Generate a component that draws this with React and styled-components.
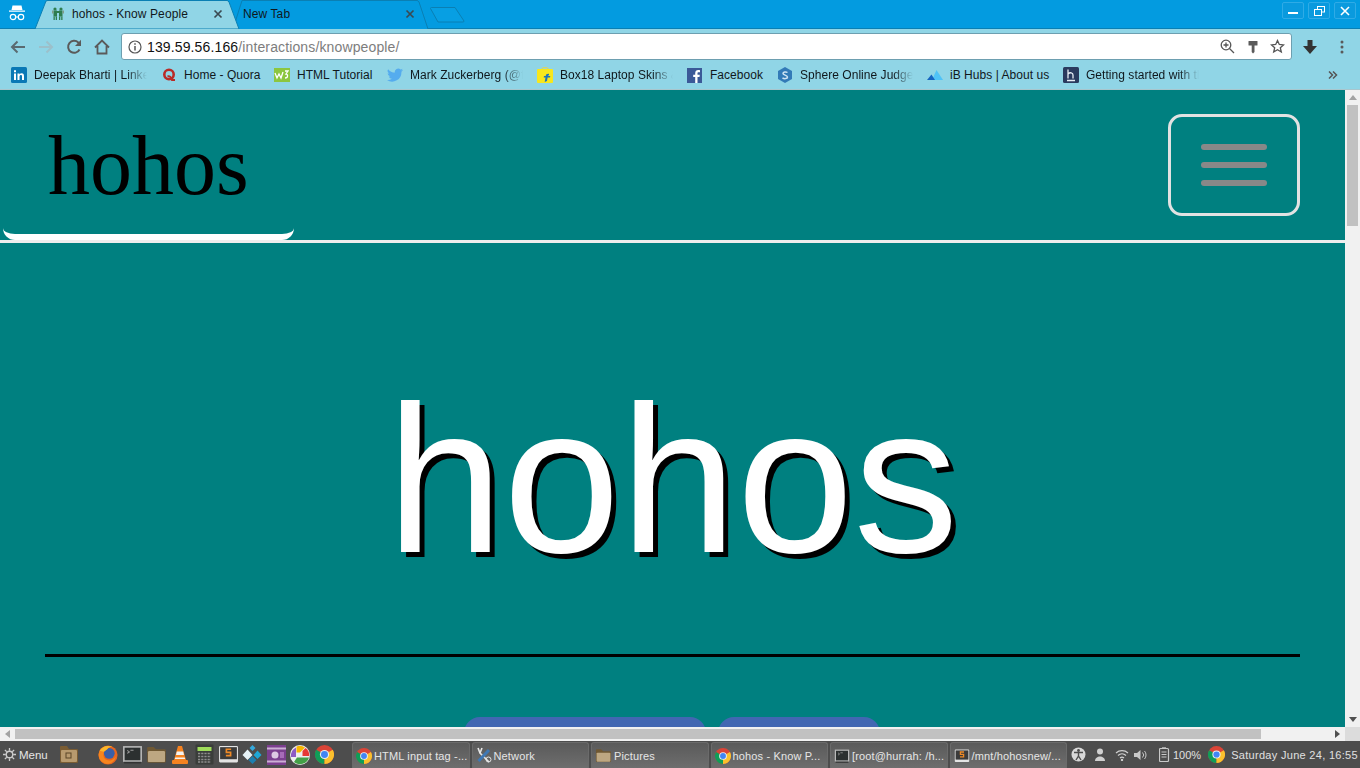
import styled, { createGlobalStyle } from 'styled-components'

const Global = createGlobalStyle`
  html, body { margin: 0; padding: 0; height: 100%; overflow: hidden; }
  body { font-family: "Liberation Sans", Arial, sans-serif; }
  * { box-sizing: border-box; }
`

const Screen = styled.div`
  width: 1360px;
  height: 768px;
  display: flex;
  flex-direction: column;
  overflow: hidden;
`

/* browser tabs */
const TabStrip = styled.div`
  height: 29px;
  flex: none;
  display: flex;
  background: #039be0;
  border-bottom: 1px solid #0a7fb3;
  position: relative;
`
const Incognito = styled.div`
  width: 34px;
  display: flex;
  align-items: center;
  justify-content: center;
  padding-bottom: 2px;
`
const Tab = styled.div`
  position: relative;
  height: 29px;
  width: ${(p) => p.$w}px;
  margin-left: ${(p) => p.$ml || 0}px;
  padding: 0 ${(p) => p.$pr}px 2px ${(p) => p.$pl}px;
  display: flex;
  align-items: center;
  font-size: 12px;
  letter-spacing: 0.1px;
  color: #10181c;
  z-index: ${(p) => (p.$active ? 2 : 1)};
`
const TabShape = styled.svg`
  position: absolute;
  left: 0;
  top: 0;
  width: 100%;
  height: 100%;
`
const TabTitle = styled.span`
  position: relative;
  flex: 1;
  margin-left: ${(p) => p.$ml || 0}px;
  white-space: nowrap;
`
const TabIcon = styled.span`
  position: relative;
  display: flex;
`
const NewTab = styled.svg`
  flex: none;
  margin: 7px 0 0 2px;
  width: 36px;
  height: 17px;
`
const WinButtons = styled.div`
  margin-left: auto;
  padding: 2px 4px 0 0;
  display: flex;
  gap: 4px;
`
const WinButton = styled.div`
  width: 22px;
  height: 17px;
  display: flex;
  align-items: center;
  justify-content: center;
  border: 1px solid #2fabe6;
  border-radius: 2px;
  background: #0a9ade;
`

/* toolbar */
const Toolbar = styled.div`
  height: 31px;
  flex: none;
  display: flex;
  align-items: center;
  background: #90d5e6;
  padding-top: 4px;
`
const NavIcon = styled.div`
  width: 28px;
  height: 26px;
  flex: none;
  display: flex;
  align-items: center;
  justify-content: center;
  margin-left: ${(p) => p.$ml || 0}px;
`
const NavIcons = styled.div`
  display: flex;
  padding-left: 4px;
  width: 121px;
`
const Omnibox = styled.div`
  width: 1171px;
  height: 27px;
  flex: none;
  display: flex;
  align-items: center;
  background: #fff;
  border: 1px solid #6d9fb0;
  border-radius: 3px;
  padding: 0 1px 0 6px;
  font-size: 14px;
  letter-spacing: 0.13px;
`
const UrlHost = styled.span`
  margin-left: 5px;
  color: #111;
`
const UrlPath = styled.span`
  color: #7d7d7d;
  flex: 1;
`
const OmniIcon = styled.div`
  width: 25px;
  display: flex;
  justify-content: center;
`

/* bookmarks */
const BookmarkBar = styled.div`
  height: 30px;
  flex: none;
  display: flex;
  align-items: center;
  background: #90d5e6;
  padding: 1px 0 0 11px;
  border-bottom: 1px solid #a9c6cd;
`
const Bookmark = styled.div`
  width: ${(p) => p.$w}px;
  flex: none;
  display: flex;
  align-items: center;
  gap: 7px;
  font-size: 12px;
  letter-spacing: 0.04px;
  color: #10181c;
`
const BookmarkLabel = styled.span`
  white-space: nowrap;
  overflow: hidden;
  width: ${(p) => p.$w}px;
  ${(p) => p.$fade && 'mask-image: linear-gradient(to right, #000 82%, transparent 100%);'}
`
const Chevrons = styled.div`
  margin-left: auto;
  padding-right: 22px;
  display: flex;
`

/* page viewport with its scrollbars */
const Viewport = styled.div`
  flex: 1;
  min-height: 0;
  display: flex;
`
const Page = styled.div`
  flex: 1;
  min-width: 0;
  overflow: hidden;
  background: #008080;
`
const Header = styled.header`
  height: 153px;
  border-bottom: 3px solid #eee;
  display: flex;
  justify-content: space-between;
  align-items: flex-end;
`
const Logo = styled.div`
  width: 291px;
  height: 150px;
  margin-left: 3px;
  padding: 22px 0 0 45px;
  border-bottom: 6px solid #fff;
  border-radius: 12px;
  font-family: "Liberation Serif", "Times New Roman", serif;
  font-size: 84px;
  line-height: 108px;
  color: #000;
`
const MenuButton = styled.button`
  width: 132px;
  height: 102px;
  margin: 0 45px 24px 0;
  padding: 0;
  background: transparent;
  border: 3px solid #e2e2e2;
  border-radius: 14px;
  display: flex;
  flex-direction: column;
  align-items: center;
  justify-content: center;
  gap: 12px;
`
const MenuBar = styled.span`
  width: 66px;
  height: 6px;
  border-radius: 3px;
  background: #888;
`
const Hero = styled.section`
  margin: 0 45px;
  height: 414px;
  padding-top: 60px;
  border-bottom: 3px solid #000;
  text-align: center;
  font-size: 210px;
  line-height: 354px;
  color: #fff;
  text-shadow: 5px 5px 0 #000;
`
const Actions = styled.div`
  display: flex;
  gap: 12px;
  margin: 60px 0 0 464px;
`
const ActionButton = styled.div`
  width: ${(p) => p.$w}px;
  height: 48px;
  flex: none;
  border-radius: 16px;
  background: #4267b2;
`
const VScroll = styled.div`
  width: 15px;
  flex: none;
  background: #f1f1f1;
  display: flex;
  flex-direction: column;
  align-items: center;
  padding-top: 5px;
`
const VThumb = styled.div`
  width: 11px;
  height: 121px;
  margin-top: 5px;
  background: #c1c1c1;
`
const DownArrow = styled.div`
  margin-top: auto;
  margin-bottom: 5px;
  border: 4px solid transparent;
  border-top: 5px solid #505050;
  border-bottom: 0;
`
const UpArrow = styled.div`
  border: 4px solid transparent;
  border-bottom: 5px solid #a3a3a3;
  border-top: 0;
`
const HScroll = styled.div`
  height: 14px;
  flex: none;
  background: #f1f1f1;
  display: flex;
  align-items: center;
`
const LeftArrow = styled.div`
  width: 15px;
  display: flex;
  justify-content: center;
  &::before {
    content: '';
    border: 4px solid transparent;
    border-right: 5px solid #a3a3a3;
    border-left: 0;
  }
`
const RightArrow = styled.div`
  margin-left: auto;
  width: 15px;
  display: flex;
  justify-content: center;
  &::before {
    content: '';
    border: 4px solid transparent;
    border-left: 5px solid #505050;
    border-right: 0;
  }
`
const HThumb = styled.div`
  width: 1246px;
  height: 10px;
  background: #c1c1c1;
`
const Corner = styled.div`
  width: 15px;
  height: 14px;
  background: #dcdcdc;
`

/* desktop panel */
const Panel = styled.div`
  height: 27px;
  flex: none;
  display: flex;
  align-items: center;
  background: #4d4d4d;
  color: #e6e6e6;
  font-size: 11px;
`
const MenuApplet = styled.div`
  flex: none;
  display: flex;
  align-items: center;
  gap: 3px;
  width: 57px;
  padding-left: 3px;
  font-size: 11.5px;
`
const Launcher = styled.div`
  flex: none;
  display: flex;
  align-items: center;
  width: 295px;
`
const LaunchIcon = styled.div`
  width: 24px;
  height: 24px;
  flex: none;
  display: flex;
  align-items: center;
  justify-content: center;
  margin-right: ${(p) => p.$mr || 0}px;
`
const WindowList = styled.div`
  flex: none;
  display: flex;
  gap: 2px;
  height: 100%;
  padding-top: 1px;
`
const WindowButton = styled.div`
  width: 117.5px;
  flex: none;
  display: flex;
  align-items: center;
  gap: 2px;
  padding: 0 3px;
  border: 1px solid #6b6b6b;
  border-bottom: 0;
  border-radius: 3px 3px 0 0;
  background: linear-gradient(#5a5a5a, #6e6e6e);
  letter-spacing: 0.15px;
  white-space: nowrap;
  overflow: hidden;
  & > svg {
    flex: none;
  }
`
const Tray = styled.div`
  flex: 1;
  min-width: 0;
  display: flex;
  align-items: center;
  color: #e0e0e0;
  white-space: nowrap;
`
const TrayIcon = styled.div`
  width: ${(p) => p.$w || 22}px;
  margin-left: ${(p) => p.$ml || 0}px;
  flex: none;
  display: flex;
  justify-content: center;
`
const Clock = styled.span`
  flex: none;
  letter-spacing: 0.3px;
`

/* drawings */
const Chrome = ({ size = 16 }) => (
  <svg width={size} height={size} viewBox="0 0 24 24">
    <circle cx="12" cy="12" r="12" fill="#db4437" />
    <path d="M12 12L1.600 6A12 12 0 0 0 12 24Z" fill="#0f9d58" />
    <path d="M12 12L12 24A12 12 0 0 0 22.400 6Z" fill="#fbc02d" />
    <circle cx="12" cy="12" r="5.800" fill="#eee" />
    <circle cx="12" cy="12" r="4.400" fill="#4285f4" />
  </svg>
)
const Folder = ({ size = 18 }) => (
  <svg width={size} height={size} viewBox="0 0 18 18">
    <path d="M1 3.500Q1 2.500 2 2.500h4.500l2 2h7.500q1 0 1 1V15q0 1-1 1H2q-1 0-1-1z" fill="#6f5833" />
    <rect x="1.700" y="6" width="14.600" height="9.500" rx="1" fill="#bda782" />
  </svg>
)
const Terminal = ({ size = 16 }) => (
  <svg width={size} height={size} viewBox="0 0 20 20">
    <rect x="1" y="2" width="18" height="15" fill="#b9b9b9" />
    <rect x="2.500" y="3.500" width="15" height="12" fill="#2c3030" />
    <path d="M5 6l2 1.500L5 9M8 6h3" stroke="#9a9a9a" fill="none" />
    <rect x="2" y="17" width="16" height="1.500" fill="#333" />
  </svg>
)
const Sublime = ({ size = 18 }) => (
  <svg width={size} height={size} viewBox="0 0 20 20">
    <rect x="1" y="2" width="18" height="15.500" rx="1" fill="#e4e4e4" />
    <rect x="2" y="3" width="16" height="11.500" fill="#3b3b3b" />
    <path d="M12.500 5H8v3h4v3H7.500" stroke="#ef8a26" strokeWidth="1.600" fill="none" />
  </svg>
)

const bookmarks = [
  { w: 150, lw: 113, fade: true, label: 'Deepak Bharti | LinkedIn', icon: (
    <svg width="16" height="16" viewBox="0 0 16 16"><rect width="16" height="16" rx="1.500" fill="#0a78b5" /><path d="M3 6.500h2V13H3zM3 3.200h2v2H3zM6.500 6.500h2v1c.5-.8 1.200-1.200 2.200-1.200 1.700 0 2.300 1.100 2.300 2.900V13h-2V9.600c0-.9-.2-1.500-1-1.500s-1.500.6-1.500 1.600V13h-2z" fill="#fff" /></svg>
  ) },
  { w: 113, lw: 80, label: 'Home - Quora', icon: (
    <svg width="16" height="16" viewBox="0 0 16 16"><circle cx="8" cy="7.500" r="4.700" fill="none" stroke="#b92b27" strokeWidth="2.600" /><path d="M6.500 9.500c2-.8 3.500.5 4.500 3.500h3" stroke="#b92b27" strokeWidth="2" fill="none" /></svg>
  ) },
  { w: 113, lw: 80, label: 'HTML Tutorial', icon: (
    <svg width="16" height="16" viewBox="0 0 16 16"><rect y="1" width="16" height="14" fill="#8cc63f" /><path d="M1 6l2 5 2-4 2 4 2-6M11 4h3l-2 3c2 0 2.500 4-1 4" stroke="#fff" strokeWidth="1.300" fill="none" /></svg>
  ) },
  { w: 150, lw: 113, fade: true, label: 'Mark Zuckerberg (@finkd)', icon: (
    <svg width="16" height="16" viewBox="0 0 24 24"><path d="M24 4.600a10 10 0 0 1-2.800.8 5 5 0 0 0 2.200-2.700 10 10 0 0 1-3.100 1.200 4.900 4.900 0 0 0-8.400 4.500A14 14 0 0 1 1.700 3.200a4.900 4.900 0 0 0 1.500 6.600 5 5 0 0 1-2.200-.6 4.900 4.900 0 0 0 3.900 4.900 5 5 0 0 1-2.200.1 4.900 4.900 0 0 0 4.600 3.400A10 10 0 0 1 0 19.600 14 14 0 0 0 21.600 7.100 10 10 0 0 0 24 4.600z" fill="#55acee" /></svg>
  ) },
  { w: 150, lw: 113, fade: true, label: 'Box18 Laptop Skins & More', icon: (
    <svg width="16" height="16" viewBox="0 0 16 16"><path d="M4.500 2.500a3.500 2 0 0 1 7 0" fill="none" stroke="#e8d44a" /><rect y="2" width="16" height="14" rx="1" fill="#f8e71c" /><path d="M12 7c-2-.5-3 .5-3.300 2H7l-.3 1.500h1.800L7.700 15l2.300-1 .6-3.500H13l.3-1.500H11c.2-.7.5-1 1-.8z" fill="#1f74ba" /></svg>
  ) },
  { w: 90, lw: 60, label: 'Facebook', icon: (
    <svg width="16" height="16" viewBox="0 0 16 16"><rect width="15" height="15" y="1" fill="#3b5998" /><path d="M10.500 16v-6h2l.3-2.300h-2.300V6.300c0-.7.2-1.100 1.100-1.100H13V3.200c-.3 0-1-.1-1.800-.1-1.800 0-3 1.100-3 3.100v1.500h-2V10h2v6z" fill="#fff" /></svg>
  ) },
  { w: 150, lw: 113, fade: true, label: 'Sphere Online Judge (SPOJ)', icon: (
    <svg width="16" height="16" viewBox="0 0 16 16"><path d="M8 0l7 4v8l-7 4-7-4V4z" fill="#337ab7" /><path d="M10.500 5.500C9 4.500 6 4.800 6 6.500S10.500 8 10.500 10 7 12 5.500 10.800" stroke="#cfe3f3" strokeWidth="1.500" fill="none" /></svg>
  ) },
  { w: 136, lw: 102, label: 'iB Hubs | About us', icon: (
    <svg width="16" height="16" viewBox="0 0 16 16"><path d="M9.500 3L16 13H5z" fill="#4fc3f7" /><path d="M4.500 7.500L8 13H0z" fill="#1565c0" /></svg>
  ) },
  { w: 170, lw: 113, fade: true, label: 'Getting started with the', icon: (
    <svg width="16" height="16" viewBox="0 0 16 16"><rect width="16" height="16" rx="1.500" fill="#2a3a5e" /><path d="M5 2.500v9M5 7c2-2 5-1.500 5 1v3.500M4 13.500h8" stroke="#e8edf5" strokeWidth="1.300" fill="none" /></svg>
  ) },
]

const launchers = [
  <svg width="20" height="20" viewBox="0 0 24 24"><circle cx="12" cy="12" r="11.500" fill="#e8651e" /><circle cx="13.500" cy="10" r="6.500" fill="#3a5fa8" /><path d="M2 7C5 1 12 0 17 2c-3 0-5 1-6 3L7 8l-.5 5c.5 4 4 6 8 5.500 3-.5 5-2 7-5-1 5-5 9-10 9C6 22.500 1 18 .8 12 .8 10 1.300 8.500 2 7z" fill="#f6861f" /><path d="M2 7C5 1 12 0 17 2c-3 0-5 1-6 3L7 8z" fill="#fbb72b" /></svg>,
  <Terminal size={21} />,
  <Folder size={21} />,
  <svg width="18" height="20" viewBox="0 0 18 20"><path d="M7 1h4l4 14H3z" fill="#f58220" /><path d="M5.800 6.500h6.400l.8 3.500H5zM4.300 12.500h9.400l.5 1.500H3.800z" fill="#f3f3f3" /><rect x="1" y="15" width="16" height="4" rx="1" fill="#f58220" /></svg>,
  <svg width="19" height="21" viewBox="0 0 19 21"><rect x="0.500" y="0.500" width="18" height="20" rx="1" fill="#3a3d3a" /><rect x="2.500" y="3" width="14" height="4" fill="#9fdc5a" /><path d="M3 9.500h13M3 12.500h13M3 15.500h13M3 18h13" stroke="#8e8e8e" strokeWidth="1.500" strokeDasharray="2.200 1" /></svg>,
  <Sublime size={21} />,
  <svg width="20" height="20" viewBox="0 0 20 20"><path d="M10.500 0l3 3-3 3-3-3z" fill="#35a9dc" /><path d="M5.500 4.500l5 5.500-5 5-5-5z" fill="#e8f4f8" /><path d="M15.500 5.500l4 4.500-4 4-4-4z" fill="#1ea7d7" /><path d="M10.500 11l4 4-4 4-4-4z" fill="#1c7fb0" /></svg>,
  <svg width="19" height="20" viewBox="0 0 19 20"><rect width="19" height="20" fill="#7b3f8f" /><rect y="2.500" width="19" height="2" fill="#cbb0d4" /><rect y="15.500" width="19" height="2" fill="#cbb0d4" /><circle cx="8" cy="10" r="3.500" fill="#ddc8e3" /><rect x="13" y="7" width="4" height="6" fill="#a66cb8" /></svg>,
  <svg width="20" height="20" viewBox="0 0 20 20"><circle cx="10" cy="10" r="10" fill="#eee" /><path d="M6.500 1.500A9.300 9.300 0 0 1 15 2.500L10 7.500H6.500z" fill="#f7b500" /><path d="M15.500 3A9.300 9.300 0 0 1 19.300 11H12.500V6z" fill="#e53935" /><path d="M19 12.500A9.300 9.300 0 0 1 4 17l3-4.500z" fill="#43a047" /><path d="M6 2.500V12H1A9.300 9.300 0 0 1 6 2.500z" fill="#8e5bc4" /></svg>,
  <Chrome size={19} />,
]

const windows = [
  { label: 'HTML input tag -...', icon: <Chrome size={16} /> },
  { label: 'Network', icon: (
    <svg width="16" height="17" viewBox="0 0 16 17" fill="none"><path d="M2 1l2 5M6 1L4 6l9 9" stroke="#e6e6e6" strokeWidth="1.600" /><circle cx="12.500" cy="12.500" r="2.500" stroke="#e6e6e6" /><path d="M13 3L2.500 14" stroke="#3f78b5" strokeWidth="3" /></svg>
  ) },
  { label: 'Pictures', icon: <Folder size={17} /> },
  { label: 'hohos - Know P...', icon: <Chrome size={16} /> },
  { label: '[root@hurrah: /h...', icon: <Terminal size={16} /> },
  { label: '/mnt/hohosnew/...', icon: <Sublime size={16} /> },
]

const Close = () => (
  <svg width="10" height="10" viewBox="0 0 10 10"><path d="M1.500 1.500l7 7M8.500 1.500l-7 7" stroke="#3a4a52" strokeWidth="1.700" /></svg>
)

export default function App() {
  return (
    <Screen>
      <Global />
      <TabStrip>
        <Incognito>
          <svg width="18" height="19" viewBox="0 0 18 19" fill="#fff">
            <path d="M4.500 1.500h9l1 4.500h-11zM1 6.500h16v1.200H1z" />
            <circle cx="5" cy="13" r="2.700" fill="none" stroke="#fff" strokeWidth="1.200" />
            <circle cx="13" cy="13" r="2.700" fill="none" stroke="#fff" strokeWidth="1.200" />
            <path d="M7.500 13h3" stroke="#fff" />
          </svg>
        </Incognito>
        <Tab $active $w={206} $pl={18} $pr={17}>
          <TabShape viewBox="0 0 206 29" preserveAspectRatio="none">
            <path d="M1 29 L12 1 Q13 .5 14 .5 L193 .5 Q194 .5 195 2 L205 29 Z" fill="#90d5e6" stroke="#0a7fb3" />
          </TabShape>
          <TabIcon>
            <svg width="12" height="14" viewBox="0 0 12 14" fill="#2e7d4f">
              <circle cx="3" cy="2" r="1.600" />
              <circle cx="9" cy="2" r="1.600" />
              <rect x="1.500" y="3.500" width="3.500" height="6" />
              <rect x="7" y="3.500" width="3.500" height="6" />
              <rect x="5" y="4" width="2" height="2" />
              <path d="M1.500 9.500h1.300V13H1.500zM3.700 9.500H5V13H3.700zM7 9.500h1.300V13H7zM9.200 9.500h1.300V13H9.200z" />
              <path d="M0 3.500h1.500v3H0zM10.500 3.500H12v3h-1.500z" fill="#7f9c8a" />
            </svg>
          </TabIcon>
          <TabTitle $ml={8}>hohos - Know People</TabTitle>
          <TabIcon><Close /></TabIcon>
        </Tab>
        <Tab $w={196} $ml={-8} $pl={11} $pr={13}>
          <TabShape viewBox="0 0 196 29" preserveAspectRatio="none">
            <path d="M1 29 L1 29 L10 .5 L185 .5 Q186 .5 187 2 L196 29" fill="#039be0" stroke="#0a7fb3" />
          </TabShape>
          <TabTitle>New Tab</TabTitle>
          <TabIcon><Close /></TabIcon>
        </Tab>
        <NewTab viewBox="0 0 36 17">
          <path d="M.5 1.500Q.5 .5 1.500 .5H25L34 14Q34 15 33 15H8z" fill="#079fe3" stroke="#0a7fb3" />
        </NewTab>
        <WinButtons>
          <WinButton>
            <svg width="10" height="10" viewBox="0 0 10 10"><rect y="6" width="10" height="2" fill="#fff" /></svg>
          </WinButton>
          <WinButton>
            <svg width="11" height="10" viewBox="0 0 11 10" fill="none" stroke="#fff"><rect x="3.500" y=".5" width="7" height="5.500" /><rect x=".5" y="3.500" width="7" height="6" fill="#0a9ade" /></svg>
          </WinButton>
          <WinButton>
            <svg width="10" height="10" viewBox="0 0 10 10"><path d="M1 1l8 8M9 1l-8 8" stroke="#fff" strokeWidth="1.600" /></svg>
          </WinButton>
        </WinButtons>
      </TabStrip>

      <Toolbar>
        <NavIcons>
          <NavIcon>
            <svg width="16" height="14" viewBox="0 0 16 14" fill="none" stroke="#5a6a70" strokeWidth="2"><path d="M15 7H2M7.500 1.500L2 7l5.500 5.500" /></svg>
          </NavIcon>
          <NavIcon>
            <svg width="16" height="14" viewBox="0 0 16 14" fill="none" stroke="#9cc0ca" strokeWidth="2"><path d="M1 7h13M8.500 1.500L14 7l-5.500 5.500" /></svg>
          </NavIcon>
          <NavIcon>
            <svg width="16" height="16" viewBox="0 0 16 16" fill="none"><path d="M13.500 10.500A6 6 0 1 1 12.300 3.500L14.500 5.500" stroke="#5a5a5a" strokeWidth="2" /><path d="M15 .8V7H9z" fill="#5a5a5a" /></svg>
          </NavIcon>
          <NavIcon>
            <svg width="16" height="16" viewBox="0 0 16 16" fill="none" stroke="#5a5a5a" strokeWidth="1.800"><path d="M1 8.500L8 1.500l7 7M3.500 7v7.500h9V7" /></svg>
          </NavIcon>
        </NavIcons>
        <Omnibox>
          <svg width="14" height="14" viewBox="0 0 14 14" fill="none" stroke="#555"><circle cx="7" cy="7" r="6" strokeWidth="1.200" /><path d="M7 6v4.500M7 3.300v1.500" strokeWidth="1.500" /></svg>
          <UrlHost>139.59.56.166</UrlHost>
          <UrlPath>/interactions/knowpeople/</UrlPath>
          <OmniIcon>
            <svg width="15" height="15" viewBox="0 0 15 15" fill="none" stroke="#555" strokeWidth="1.300"><circle cx="6" cy="6" r="4.800" /><path d="M9.500 9.500L14 14M6 3.500v5M3.500 6h5" /></svg>
          </OmniIcon>
          <OmniIcon>
            <svg width="12" height="14" viewBox="0 0 12 14" fill="#5a5a5a"><rect x="1.500" y="1" width="9" height="4.500" rx=".5" /><path d="M4.700 5h2.800v7L6 13.500 4.700 12z" /></svg>
          </OmniIcon>
          <OmniIcon>
            <svg width="15" height="15" viewBox="0 0 15 15" fill="none" stroke="#555" strokeWidth="1.300"><path d="M7.500 1.500l1.800 4 4.200.4-3.200 2.800 1 4.300-3.800-2.300-3.800 2.300 1-4.300L1.500 5.900l4.200-.4z" /></svg>
          </OmniIcon>
        </Omnibox>
        <NavIcon $ml={4}>
          <svg width="14" height="14" viewBox="0 0 14 14" fill="#333"><path d="M4.500 0h5v6H14l-7 8-7-8h4.500z" /></svg>
        </NavIcon>
        <NavIcon $ml={4}>
          <svg width="4" height="14" viewBox="0 0 4 14" fill="#5a5a5a"><circle cx="2" cy="2" r="1.500" /><circle cx="2" cy="7" r="1.500" /><circle cx="2" cy="12" r="1.500" /></svg>
        </NavIcon>
      </Toolbar>

      <BookmarkBar>
        {bookmarks.map((b) => (
          <Bookmark key={b.label} $w={b.w}>
            {b.icon}
            <BookmarkLabel $w={b.lw} $fade={b.fade}>{b.label}</BookmarkLabel>
          </Bookmark>
        ))}
        <Chevrons>
          <svg width="10" height="8" viewBox="0 0 10 8" fill="none" stroke="#555" strokeWidth="1.500"><path d="M1 .5L4.500 4 1 7.500M5 .5L8.500 4 5 7.500" /></svg>
        </Chevrons>
      </BookmarkBar>

      <Viewport>
        <Page>
          <Header>
            <Logo>hohos</Logo>
            <MenuButton>
              <MenuBar />
              <MenuBar />
              <MenuBar />
            </MenuButton>
          </Header>
          <Hero>hohos</Hero>
          <Actions>
            <ActionButton $w={242} />
            <ActionButton $w={162} />
          </Actions>
        </Page>
        <VScroll>
          <UpArrow />
          <VThumb />
          <DownArrow />
        </VScroll>
      </Viewport>
      <HScroll>
        <LeftArrow />
        <HThumb />
        <RightArrow />
        <Corner />
      </HScroll>

      <Panel>
        <MenuApplet>
          <svg width="13" height="13" viewBox="0 0 14 14" fill="none" stroke="#ccc"><circle cx="7" cy="7" r="3.500" strokeWidth="1.500" /><path d="M7 0v3M7 11v3M0 7h3M11 7h3M2 2l2 2M10 10l2 2M12 2l-2 2M4 10l-2 2" strokeWidth="1.400" /></svg>
          Menu
        </MenuApplet>
        <Launcher>
          <LaunchIcon $mr={15}>
            <svg width="20" height="19" viewBox="0 0 20 19"><path d="M1 2q0-1 1-1h6l2 3h8q1 0 1 1v12q0 1-1 1H2q-1 0-1-1z" fill="#7a5c33" /><rect x="2" y="5" width="16" height="12" rx="1" fill="#b89a6e" /><rect x="7" y="8" width="5" height="5" fill="none" stroke="#5a4526" /></svg>
          </LaunchIcon>
          {launchers.map((icon, i) => (
            <LaunchIcon key={i}>{icon}</LaunchIcon>
          ))}
        </Launcher>
        <WindowList>
          {windows.map((w) => (
            <WindowButton key={w.label}>
              {w.icon}
              {w.label}
            </WindowButton>
          ))}
        </WindowList>
        <Tray>
          <TrayIcon>
            <svg width="15" height="15" viewBox="0 0 15 15"><circle cx="7.500" cy="7.500" r="7" fill="#d8d8d8" /><circle cx="7.500" cy="3.500" r="1.400" fill="#4d4d4d" /><path d="M3 5.500h9M7.500 5.500v3.500L5 13M7.500 9l2.500 4" stroke="#4d4d4d" strokeWidth="1.400" fill="none" /></svg>
          </TrayIcon>
          <TrayIcon>
            <svg width="12" height="13" viewBox="0 0 12 13" fill="#d0d0d0"><circle cx="6" cy="3.500" r="3" /><path d="M1 13c0-6 10-6 10 0z" /></svg>
          </TrayIcon>
          <TrayIcon>
            <svg width="14" height="12" viewBox="0 0 14 12" fill="none" stroke="#d0d0d0" strokeWidth="1.200"><path d="M1 4a9 9 0 0 1 12 0M3 6.500a6 6 0 0 1 8 0M5 9a3 3 0 0 1 4 0" /><circle cx="7" cy="11" r=".6" /></svg>
          </TrayIcon>
          <TrayIcon $w={16}>
            <svg width="14" height="12" viewBox="0 0 14 12" fill="#c8c8c8"><path d="M0 4h3l3.500-3v10L3 8H0z" /><path d="M8.500 3.500a3.500 3.500 0 0 1 0 5M10.500 2a6 6 0 0 1 0 8" fill="none" stroke="#c8c8c8" /></svg>
          </TrayIcon>
          <TrayIcon $w={18} $ml={6}>
            <svg width="11" height="15" viewBox="0 0 11 15" fill="none" stroke="#c8c8c8"><rect x=".5" y="1.500" width="9" height="13" rx="1" strokeWidth="1.200" /><path d="M3 0.800h4M2.500 5h5M2.500 7.500h5M2.500 10h5" /></svg>
          </TrayIcon>
          <span>100%</span>
          <TrayIcon $w={30}><Chrome size={17} /></TrayIcon>
          <Clock>Saturday June 24, 16:55</Clock>
        </Tray>
      </Panel>
    </Screen>
  )
}
